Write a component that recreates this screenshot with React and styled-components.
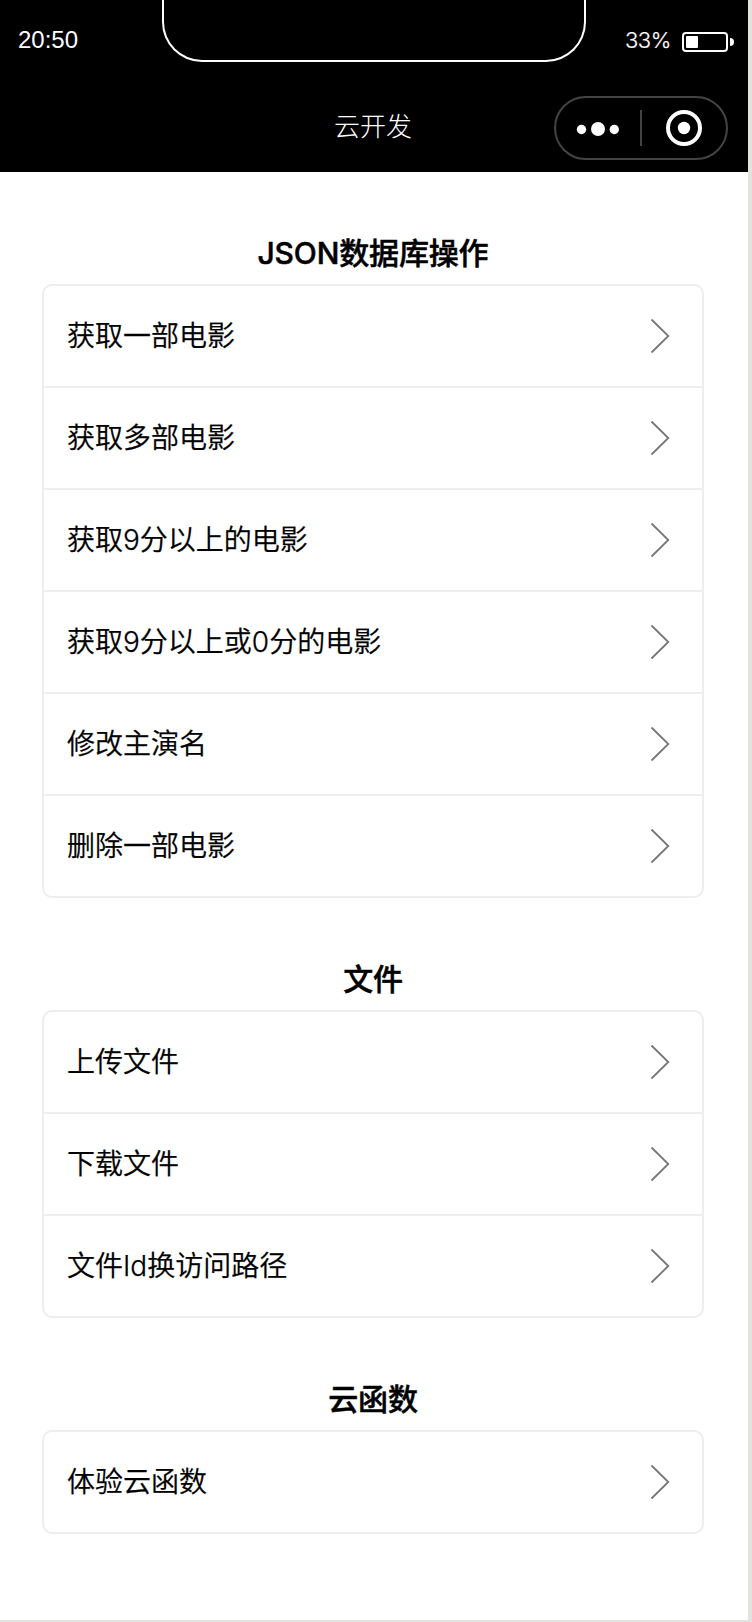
import React from 'react'
import styled, { createGlobalStyle } from 'styled-components'

const GlobalStyle = createGlobalStyle`
  * {
    box-sizing: border-box;
  }
  body {
    margin: 0;
    background-color: #e2e3de;
    font-family: Inter, "Noto Sans CJK SC", sans-serif;
    color: #000;
  }
`
const Phone = styled.div`
  width: 748px;
  height: 1620px;
  background-color: #fff;
`
const Header = styled.header`
  height: 172px;
  background-color: #000;
  color: #fff;
`
const StatusBar = styled.div`
  display: flex;
  justify-content: space-between;
  align-items: flex-start;
  height: 80px;
  padding: 0 14px 0 18px;
`
const Time = styled.div`
  width: 144px;
  padding-top: 26px;
  font-size: 24px;
  line-height: 28px;
  font-family: "Liberation Sans", sans-serif;
`
const Notch = styled.div`
  width: 424px;
  height: 62px;
  border: 2px solid #fff;
  border-top: none;
  border-radius: 0 0 40px 40px;
`
const Battery = styled.div`
  display: flex;
  justify-content: flex-end;
  width: 148px;
  padding-top: 28px;
`
const Percent = styled.span`
  margin: -1px 11px 0 0;
  font-size: 22px;
  font-weight: 300;
  line-height: 26px;
  letter-spacing: -0.4px;
  -webkit-text-stroke: 0.2px #fff;
`
const BatteryIcon = styled.svg`
  flex: none;
  width: 52px;
  height: 20px;
  margin-top: 4px;
`
const NavBar = styled.div`
  display: grid;
  grid-template-columns: 1fr auto 1fr;
  align-items: start;
  height: 92px;
  padding: 0 20px 0 18px;
`
const Title = styled.h1`
  grid-column: 2;
  margin: 27px 0 0;
  font-size: 26px;
  font-weight: 300;
  line-height: 36px;
  font-family: "Noto Sans CJK SC", sans-serif;
`
const Capsule = styled.div`
  display: flex;
  align-items: center;
  justify-self: end;
  width: 174px;
  height: 64px;
  margin-top: 16px;
  border: 2px solid #444;
  border-radius: 32px;
`
const CapsuleButton = styled.button`
  display: flex;
  justify-content: center;
  align-items: center;
  flex: 1;
  height: 100%;
  padding: 0;
  border: none;
  background: none;
  cursor: pointer;
`
const CapsuleLine = styled.div`
  width: 2px;
  height: 36px;
  background-color: #444;
`
const Content = styled.main`
  padding: 61px 44px 0 42px;
`
const Section = styled.section`
  margin-bottom: 61px;
`
const SectionTitle = styled.h2`
  height: 51px;
  margin: 0;
  font-size: 30px;
  font-weight: 500;
  line-height: 40px;
  letter-spacing: -0.15px;
  text-align: center;
  -webkit-text-stroke: 0.5px #000;
`
const List = styled.div`
  border: 2px solid #eee;
  border-radius: 10px;
`
const Row = styled.div`
  display: flex;
  justify-content: space-between;
  align-items: center;
  height: 102px;
  padding: 0 32px 0 23px;
  border-bottom: 2px solid #eee;
  font-size: 28px;
  font-weight: 350;
  line-height: 40px;
  cursor: pointer;
  -webkit-text-stroke: 0.25px #000;
  &:last-child {
    height: 100px;
    border-bottom: none;
  }
`
const Arrow = styled.svg`
  width: 20px;
  height: 36px;
`

const sections = [
  {
    title: 'JSON数据库操作',
    items: ['获取一部电影', '获取多部电影', '获取9分以上的电影', '获取9分以上或0分的电影', '修改主演名', '删除一部电影'],
  },
  {
    title: '文件',
    items: ['上传文件', '下载文件', '文件Id换访问路径'],
  },
  {
    title: '云函数',
    items: ['体验云函数'],
  },
]

const App = () => {
  return (
    <>
      <GlobalStyle />
      <Phone>
        <Header>
          <StatusBar>
            <Time>20:50</Time>
            <Notch />
            <Battery>
              <Percent>33%</Percent>
              <BatteryIcon viewBox="0 0 52 20">
                <rect x="1" y="1" width="44" height="18" rx="3" fill="none" stroke="#fff" strokeWidth="2" />
                <rect x="4" y="4" width="12" height="12" rx="1" fill="#fff" />
                <path d="M48 6a4 4 0 0 1 0 8z" fill="#fff" />
              </BatteryIcon>
            </Battery>
          </StatusBar>
          <NavBar>
            <Title>云开发</Title>
            <Capsule>
              <CapsuleButton>
                <svg width="44" height="16" viewBox="0 0 44 16" fill="#fff">
                  <circle cx="5.5" cy="9.5" r="4.7" />
                  <circle cx="22" cy="9" r="7" />
                  <circle cx="38.3" cy="9.5" r="4.7" />
                </svg>
              </CapsuleButton>
              <CapsuleLine />
              <CapsuleButton>
                <svg width="36" height="36" viewBox="0 0 36 36">
                  <circle cx="18" cy="18" r="16" fill="none" stroke="#fff" strokeWidth="4" />
                  <circle cx="18" cy="18" r="6.2" fill="#fff" />
                </svg>
              </CapsuleButton>
            </Capsule>
          </NavBar>
        </Header>
        <Content>
          {sections.map((section) => (
            <Section key={section.title}>
              <SectionTitle>{section.title}</SectionTitle>
              <List>
                {section.items.map((item) => (
                  <Row key={item}>
                    {item}
                    <Arrow viewBox="0 0 20 36">
                      <path d="M1.5 1.5L18.3 18L1.5 34.5" fill="none" stroke="#777" strokeWidth="1.8" />
                    </Arrow>
                  </Row>
                ))}
              </List>
            </Section>
          ))}
        </Content>
      </Phone>
    </>
  )
}

export default App
